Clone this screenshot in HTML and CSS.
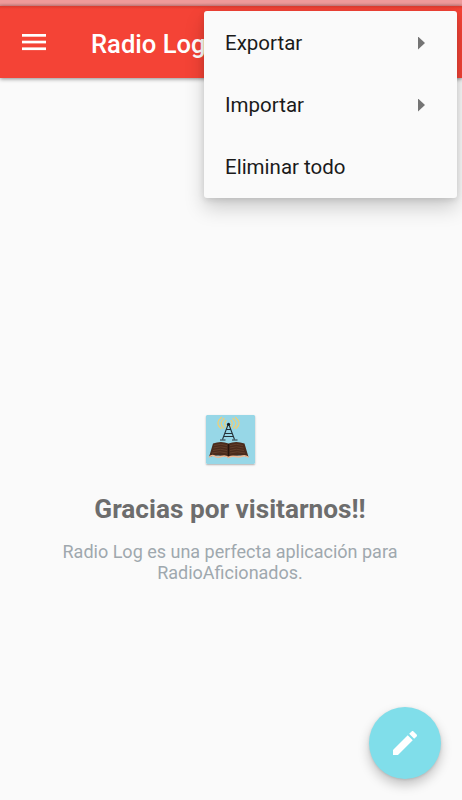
FILE: index.html
```html
<!DOCTYPE html>
<html lang="es">

<head>
  <meta charset="UTF-8" />
  <meta name="viewport" content="width=device-width, initial-scale=1.0" />
  <title>Radio Log</title>
  <link rel="stylesheet" href="styles.css">
</head>

<body>
  <div class="status-bar"></div>
  <header class="toolbar">
    <svg class="menu-icon" width="24" height="18" viewBox="0 0 24 18" fill="#fff">
      <rect y="1" width="24" height="2.7" />
      <rect y="7.7" width="24" height="2.7" />
      <rect y="14.4" width="24" height="2.7" />
    </svg>
    <h1>Radio Log</h1>
  </header>

  <main class="empty">
    <svg class="logo" width="49" height="49" viewBox="0 0 49 49">
      <rect width="49" height="49" rx="1" fill="#97d7e7" />
      <!-- radio waves -->
      <g fill="none" stroke="#edcf78" stroke-width="1.3" stroke-linecap="round">
        <path d="M20 5.500Q17.500 8.500 20 12" />
        <path d="M18 3.500Q12.500 8 17.500 13" />
        <path d="M15.500 2.500Q8.500 8 15 13.500" />
        <path d="M25 5.500Q27.500 8.500 25 12" />
        <path d="M27 3.500Q32.500 8 27.500 13" />
        <path d="M29.500 2.500Q36.500 8 30 13.500" />
      </g>
      <!-- antenna -->
      <g fill="none" stroke="#26333a" stroke-width="1.100">
        <path d="M22.300 9L16.500 24.500M22.700 9L28.500 24.500M20.500 14.500h4M19 18.500h7.500M17.800 21.500h9.500" />
        <path d="M14 25h5.500M26 25h5.500" />
      </g>
      <circle cx="22.500" cy="9.200" r="1.500" fill="#16191b" />
      <!-- open book -->
      <path d="M3 42L7 28.500Q15 25.500 22.500 28.500Q30 25.500 38.500 28.500L42.500 42Q32 39 22.500 42.500Q13 39 3 42Z" fill="#4a2b1c" />
      <g fill="none" stroke="#7a523b" stroke-width="0.500">
        <path d="M8 30.500Q15 28 21 30.500M7.500 33Q15 30.500 21 33M7 35.500Q15 33 21 35.500M6 38Q14 35.500 21 38" />
        <path d="M24 30.500Q30 28 37 30.500M24 33Q30 30.500 37.500 33M24 35.500Q30 33 38 35.500M24 38Q31 35.500 39 38" />
      </g>
      <path d="M22.500 29v12" stroke="#26150e" stroke-width="1.200" />
      <path d="M3 42.300Q6 39.500 9 41.300T15.500 41.500T22.500 42.500Q26 40.500 29.500 41.500T36 41.200T42.500 42.300" fill="none" stroke="#edb894" stroke-width="1.500" />
    </svg>
    <h2>Gracias por visitarnos!!</h2>
    <p>Radio Log es una perfecta aplicación para RadioAficionados.</p>
  </main>

  <ul class="popup-menu">
    <li>Exportar <span class="arrow"></span></li>
    <li>Importar <span class="arrow"></span></li>
    <li>Eliminar todo</li>
  </ul>

  <button class="fab" aria-label="Editar">
    <svg width="32" height="32" viewBox="0 0 24 24" fill="#fff">
      <path d="M3 17.250V21h3.750L17.810 9.940l-3.750-3.750L3 17.250zM20.710 7.040c.39-.39.39-1.020 0-1.410l-2.340-2.340c-.39-.39-1.020-.39-1.410 0l-1.830 1.830 3.750 3.750 1.830-1.830z" />
    </svg>
  </button>
</body>

</html>
```

FILE: styles.css
```css
* {
  box-sizing: border-box;
}

body {
  display: flex;
  flex-direction: column;
  height: 100vh;
  margin: 0;
  position: relative;
  overflow: hidden;
  background: #fafafa;
  font-family: Roboto, sans-serif;
}

.status-bar {
  height: 6px;
  background: linear-gradient(#ee9a9a 50%, #d98888);
}

.toolbar {
  display: flex;
  align-items: center;
  height: 72px;
  padding: 0 22px;
  background: linear-gradient(#d93a2e, #f44336 3px);
  box-shadow: 0 1px 4px rgba(0, 0, 0, 0.45);
}

.toolbar h1 {
  margin: 3px 0 0 45px;
  color: #fff;
  font-size: 25.6px;
  font-weight: 500;
  line-height: 32px;
}

.empty {
  flex: 1;
  display: flex;
  flex-direction: column;
  align-items: center;
  padding: 337px 52px 0 50px;
  text-align: center;
}

.logo {
  box-shadow: 0 1px 2px rgba(0, 0, 0, 0.3);
  border-radius: 1px;
}

.empty h2 {
  margin: 29px 0 0;
  color: #6d6d6d;
  font-size: 26.2px;
  font-weight: 700;
  line-height: 32px;
}

.empty p {
  margin: 16px 0 0;
  color: #9fa8ae;
  font-size: 18px;
  line-height: 21px;
}

.popup-menu {
  position: absolute;
  top: 11px;
  right: 5px;
  width: 253px;
  margin: 0;
  padding: 1px 0 0;
  list-style: none;
  background: #fafafa;
  border-radius: 3px;
  box-shadow: 0 10px 20px rgba(0, 0, 0, 0.18), 0 2px 6px rgba(0, 0, 0, 0.12);
}

.popup-menu li {
  display: flex;
  align-items: center;
  justify-content: space-between;
  height: 62px;
  padding: 0 32px 0 21px;
  color: #1a1a1a;
  font-size: 20.5px;
}

.arrow {
  width: 7px;
  height: 13px;
  background: #747474;
  clip-path: polygon(0 0, 100% 50%, 0 100%);
}

.fab {
  position: absolute;
  right: 21px;
  bottom: 21px;
  display: flex;
  align-items: center;
  justify-content: center;
  width: 72px;
  height: 72px;
  padding: 0;
  border: none;
  border-radius: 50%;
  background: #80deea;
  box-shadow: 0 6px 12px rgba(0, 0, 0, 0.22), 0 1px 3px rgba(0, 0, 0, 0.12);
}
```
